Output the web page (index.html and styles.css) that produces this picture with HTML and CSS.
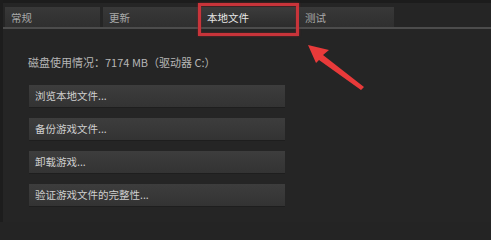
FILE: index.html
```html
<!DOCTYPE html>
<html lang="zh">
<head>
<meta charset="utf-8">
<link rel="stylesheet" href="styles.css">
</head>
<body>
<div class="window">
  <div class="tabs">
    <div class="tab">常规</div>
    <div class="tab">更新</div>
    <div class="tab active">本地文件</div>
    <div class="tab">测试</div>
  </div>
  <div class="content">
    <div class="info">磁盘使用情况：7174 MB（驱动器 C:）</div>
    <div class="btn">浏览本地文件...</div>
    <div class="btn">备份游戏文件...</div>
    <div class="btn">卸载游戏...</div>
    <div class="btn">验证游戏文件的完整性...</div>
  </div>
  <svg class="arrow" width="70" height="60" viewBox="0 0 70 60">
    <polygon points="5,5 26,10 20,15 61,47 58,50 16,20 13,23" fill="#e83a3a"/>
  </svg>
</div>
</body>
</html>
```

FILE: styles.css
```css
html, body {
  margin: 0;
  padding: 0;
  background: #242424;
}
body {
  width: 491px;
  height: 222px;
  overflow: hidden;
  font-family: "Noto Sans CJK SC", "Noto Sans", sans-serif;
}
.window {
  position: relative;
  width: 491px;
  height: 222px;
  background: #252525;
  border-left: 3px solid #1d1d1d;
  box-sizing: border-box;
}
.tabs {
  display: flex;
  gap: 3px;
  padding: 4px 0 0 2px;
  height: 29px;
  box-sizing: border-box;
  border-top: 3px solid #1c1c1c;
  border-bottom: 2px solid #4c4c4c;
}
.tab {
  position: relative;
  width: 95px;
  height: 20px;
  background: linear-gradient(#383838, #2f2f2f);
  color: #a9a9a9;
  font-size: 10.5px;
  line-height: 21px;
  padding-left: 6px;
  box-sizing: border-box;
}
.tab.active {
  background: linear-gradient(#3c3c3c, #2c2c2c);
  color: #e6e6e6;
}
.tab.active::after {
  content: "";
  position: absolute;
  left: -3px;
  top: -4px;
  right: -3px;
  bottom: -9px;
  border: 3px solid #c8343a;
  box-shadow: 0 0 2px #7a2226, inset 0 0 2px #7a2226;
}
.content {
  padding: 25px 0 0 25px;
}
.info {
  font-size: 11px;
  color: #b6b6b6;
  height: 16px;
  line-height: 16px;
  margin-bottom: 15px;
}
.btn {
  width: 256px;
  height: 23px;
  margin-bottom: 10px;
  margin-left: 1px;
  background: linear-gradient(#3d3d3d, #333333);
  border-bottom: 1px solid #1e1e1e;
  box-sizing: border-box;
  color: #cfcfcf;
  font-size: 10.5px;
  line-height: 22px;
  padding-left: 6px;
}
.arrow {
  position: absolute;
  left: 300px;
  top: 40px;
}
```
